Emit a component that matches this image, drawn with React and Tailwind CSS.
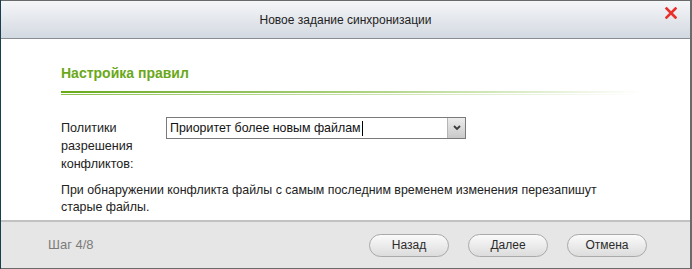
export default function App() {
    const font = { fontFamily: '"Liberation Sans", Arial, sans-serif' };
    return (
        <div className="w-[692px] h-[269px] bg-[#173f4e] overflow-hidden" style={font}>
            <div className="ml-[1px] w-[691px] h-[269px] flex flex-col bg-white border-t border-r-2 border-b border-[#6a6a6a]">
                {/* title bar */}
                <div className="relative h-[38px] shrink-0 flex items-center justify-center bg-gradient-to-b from-[#f5f6f8] to-[#d3d9e1] border-b border-[#8a8d91]">
                    <span className="text-[12px] text-[#222]">Новое задание синхронизации</span>
                    <button type="button" className="absolute right-[13px] top-[6px] w-[12px] h-[12px]">
                        <svg viewBox="0 0 12 12" width="12" height="12">
                            <path d="M1.5 1.5 L10.5 10.5 M10.5 1.5 L1.5 10.5" stroke="#e8302c" strokeWidth="2.6" strokeLinecap="square" />
                        </svg>
                    </button>
                </div>

                {/* content */}
                <div className="flex-1 pl-[60px] pr-[50px] pt-[25px]">
                    <div className="text-[14px] leading-[18px] font-bold text-[#6aa81a]">Настройка правил</div>
                    <div className="mt-[9px] h-[2px] w-[580px] bg-gradient-to-r from-[#69aa16] via-[#a9d07a] to-transparent"></div>
                    <div className="mt-[1px] h-[1px] w-[580px] bg-gradient-to-r from-[#8cc04a] via-[#c6e0a6] to-transparent"></div>

                    <div className="mt-[22px] flex items-start">
                        <div className="w-[105px] pt-[2px] text-[12.6px] leading-[18px] text-[#222]">
                            Политики разрешения конфликтов:
                        </div>
                        <div className="w-[300px] h-[22px] flex border border-[#7a7a7a] bg-white">
                            <div className="flex-1 flex items-center pl-[3px] text-[12.4px] text-[#111]">
                                Приоритет более новым файлам<span className="ml-[1px] w-[1px] h-[15px] bg-black"></span>
                            </div>
                            <div className="w-[18px] flex items-center justify-center border-l border-[#b5b5b5] bg-gradient-to-b from-[#ececec] to-[#c9c9c9]">
                                <svg viewBox="0 0 8 6" width="8" height="6">
                                    <path d="M1 1 L4 4 L7 1" fill="none" stroke="#3c3c3c" strokeWidth="1.8" />
                                </svg>
                            </div>
                        </div>
                    </div>

                    <div className="mt-[9px] text-[12.4px] leading-[17px] text-[#222]">
                        При обнаружении конфликта файлы с самым последним временем изменения перезапишут<br />
                        старые файлы.
                    </div>
                </div>

                {/* footer */}
                <div className="h-[48px] shrink-0 flex items-center pl-[47px] pr-[43px] bg-[#e6e6e6] border-t-2 border-[#c2c2c2]">
                    <span className="text-[13px] text-[#7b7b7b]">Шаг 4/8</span>
                    <div className="ml-auto flex gap-[19px]">
                        {['Назад', 'Далее', 'Отмена'].map(label => (
                            <button
                                key={label}
                                type="button"
                                className="w-[80px] h-[23px] rounded-full border border-[#a9a9a9] bg-gradient-to-b from-[#fbfbfb] to-[#dcdcdc] text-[12px] text-[#2b2b2b]"
                            >
                                {label}
                            </button>
                        ))}
                    </div>
                </div>
            </div>
        </div>
    );
}
